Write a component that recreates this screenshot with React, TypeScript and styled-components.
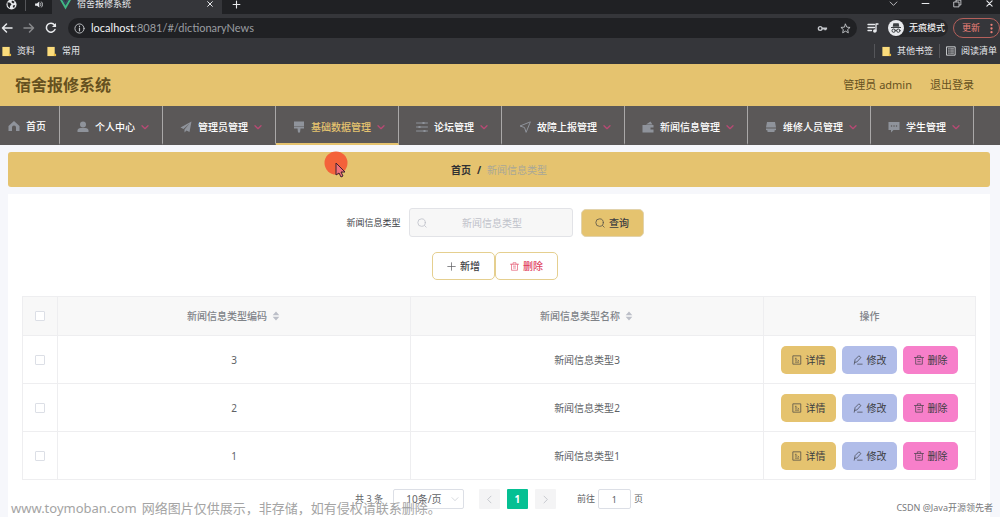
import React from "react";
import styled, { createGlobalStyle } from "styled-components";

const GlobalStyle = createGlobalStyle`
  *, *::before, *::after { box-sizing: border-box; }
  body {
    margin: 0;
    background: #f6f7fb;
    font-family: "Noto Sans", "Noto Sans CJK SC", sans-serif;
    font-size: 10px;
    line-height: 14px;
    color: #606266;
  }
  button, input, select { font: inherit; color: inherit; margin: 0; padding: 0; }
  button { border: 0; background: none; cursor: pointer; }
  a { color: inherit; text-decoration: none; }
`;

const Page = styled.div`
  position: relative;
  min-height: 100vh;
  overflow: hidden;
`;

/* ---------- icons ---------- */

const Svg = styled.svg<{ $size: number }>`
  display: block;
  flex: none;
  width: ${(p) => p.$size}px;
  height: ${(p) => p.$size}px;
  fill: none;
  stroke: currentColor;
  stroke-width: 2;
  stroke-linecap: round;
  stroke-linejoin: round;
`;

const solid = { fill: "currentColor", stroke: "none" };

const glyphs: Record<string, React.ReactNode> = {
  globe: (
    <>
      <circle cx="12" cy="12" r="11" {...solid} />
      <path d="M3 7l6 1 3 4-3 3-1 5-4-5zM13 3l6 3-3 4-4-3zM15 14l5-1-2 6-3-1z" fill="#202124" stroke="none" />
    </>
  ),
  speaker: (
    <>
      <path d="M3 9h5l6-5v16l-6-5H3z" {...solid} />
      <path d="M17 8c2 2 2 6 0 8M20 5c4 4 4 10 0 14" />
    </>
  ),
  vue: (
    <>
      <path d="M0 2h5l7 12 7-12h5L12 23z" fill="#41b883" stroke="none" />
      <path d="M5 2h4l3 5 3-5h4l-7 12z" fill="#34495e" stroke="none" />
    </>
  ),
  close: <path d="M5 5l14 14M19 5L5 19" strokeWidth="3" />,
  plusBold: <path d="M12 3v18M3 12h18" strokeWidth="3" />,
  down: <path d="M3 8l9 9 9-9" />,
  arrow: <path d="M3 8l9 9 9-9" strokeWidth="4" />,
  minimise: <path d="M3 12h18" strokeWidth="3" />,
  restore: <path d="M8 7V3h13v13h-4M3 8h13v13H3z" />,
  back: <path d="M22 12H3M11 4l-8 8 8 8" strokeWidth="3" />,
  forward: <path d="M2 12h19M13 4l8 8-8 8" strokeWidth="3" />,
  reload: (
    <>
      <path d="M20 15a9 9 0 1 1-1-9l2 2" strokeWidth="3" />
      <path d="M22 2v8h-8z" {...solid} />
    </>
  ),
  info: (
    <>
      <circle cx="12" cy="12" r="10" />
      <path d="M12 11v6M12 7v.5" strokeWidth="2.6" />
    </>
  ),
  key: (
    <>
      <circle cx="7" cy="12" r="4" strokeWidth="3" />
      <path d="M11 12h11M18 12v4" strokeWidth="4" strokeLinecap="butt" />
    </>
  ),
  star: <path d="M12 2.500l2.900 6.500 7.100.700-5.300 4.700 1.500 7L12 17.800l-6.200 3.600 1.500-7L2 9.700l7.100-.7z" />,
  playlist: (
    <>
      <path d="M2 5h13M2 11h13M2 17h7" strokeWidth="2.600" />
      <path d="M18 18V4h4" strokeWidth="2.600" />
      <circle cx="15.500" cy="18" r="3.500" {...solid} />
    </>
  ),
  incognito: (
    <>
      <circle cx="12" cy="12" r="12" fill="#e8eaed" stroke="none" />
      <path d="M8 5h8l1 5H7zM4.500 10.500h15V12h-15z" fill="#3c4043" stroke="none" />
      <g stroke="#3c4043" strokeWidth="1.500">
        <circle cx="8.500" cy="16" r="2.500" />
        <circle cx="15.500" cy="16" r="2.500" />
        <path d="M11 15.500h2" />
      </g>
    </>
  ),
  more: (
    <g {...solid}>
      <circle cx="12" cy="4" r="2.500" />
      <circle cx="12" cy="12" r="2.500" />
      <circle cx="12" cy="20" r="2.500" />
    </g>
  ),
  folder: (
    <>
      <path d="M3 2h16v20H3z" fill="#fbdc7c" stroke="none" />
      <path d="M17 17h5v5h-5z" fill="#e9b93f" stroke="none" />
    </>
  ),
  reading: <path d="M2 2h20v20H2zM6 7h2M11 7h7M6 12h2M11 12h7M6 17h2M11 17h7" />,
  home: <path d="M12 2L1 12v10h7v-7a4 4 0 0 1 8 0v7h7V12z" {...solid} />,
  user: (
    <g {...solid}>
      <circle cx="12" cy="7" r="6" />
      <path d="M1 22v-3c0-3 3-5 6-5h10c3 0 6 2 6 5v3z" />
    </g>
  ),
  promotion: <path d="M23 1L1 13l6 3L19 5 9 17v6l4-4 6 3z" {...solid} />,
  brush: <path d="M2 1h20v9H2zM2 11h20v4h-7l-1 8h-4l-1-8H2z" {...solid} />,
  sliders: (
    <>
      <path d="M1 4h22M1 12h22M1 20h22" />
      <path d="M15 2v4M7 10v4M17 18v4" strokeWidth="4" strokeLinecap="butt" />
    </>
  ),
  position: <path d="M22 2L2 10l9 3 3 9z" />,
  wallet: (
    <>
      <path d="M1 8h22v5h-6v4h6v6H1z" {...solid} />
      <path d="M8 7l9-6 4 6z" {...solid} />
    </>
  ),
  printer: (
    <>
      <path d="M4 2h16l2 11H2z" {...solid} />
      <path d="M2 15h20v3l-3 1v3H5v-3l-3-1z" {...solid} />
    </>
  ),
  chat: (
    <>
      <path d="M1 2h22v16H11l-5 5v-5H1z" {...solid} />
      <path d="M7 10h.1M12 10h.1M17 10h.1" stroke="#5b5858" strokeWidth="3" />
    </>
  ),
  search: (
    <>
      <circle cx="11" cy="11" r="9" />
      <path d="M18 18l4 4" />
    </>
  ),
  plus: <path d="M12 2v20M2 12h20" />,
  trash: <path d="M1 6h22M8 6V2h8v4M4 6v16h16V6M9 11h6M9 16h6" />,
  detail: <path d="M3 2h18v20H3zM8 8h2M8 12h3M8 17h8M14 12l2 2" />,
  edit: <path d="M4 17l1-6 9-9 5 4-9 10zM4 17l-1 5M11 22h11" />,
  left: <path d="M16 3l-9 9 9 9" />,
  right: <path d="M8 3l9 9-9 9" />,
  sort: <path d="M12 1l8 9H4zM12 23l8-9H4z" {...solid} />,
};

const Icon = ({ name, size = 12 }: { name: string; size?: number }) => (
  <Svg viewBox="0 0 24 24" $size={size} aria-hidden="true">
    {glyphs[name]}
  </Svg>
);

/* ---------- browser chrome ---------- */

const Browser = styled.div`
  background: #35363a;
  color: #e8eaed;
`;

const TabStrip = styled.div`
  display: flex;
  height: 14px;
  overflow: hidden;
  background: #202124;
`;

const PinnedTabs = styled.div`
  display: flex;
  align-items: center;
  justify-content: space-between;
  width: 52px;
  padding: 0 9px 6px 6px;
`;

const TabDivider = styled.span`
  width: 1px;
  height: 14px;
  background: #55565a;
`;

const ActiveTab = styled.div`
  display: flex;
  align-items: center;
  gap: 6px;
  width: 170px;
  padding: 0 8px 6px;
  background: #35363a;
`;

const TabTitle = styled.span`
  flex: 1;
  font-size: 9px;
  white-space: nowrap;
`;

const StripButtons = styled.div`
  display: flex;
  align-items: center;
  padding: 0 10px 6px;
`;

const WindowButtons = styled(StripButtons)`
  gap: 23px;
  margin-left: auto;
  padding: 0 6px 8px;
`;

const IconButton = styled.button<{ $dim?: boolean }>`
  display: flex;
  flex: none;
  color: ${(p) => (p.$dim ? "#88898c" : "inherit")};
`;

const Toolbar = styled.div`
  display: flex;
  align-items: center;
  height: 28px;
`;

const NavButtons = styled.div`
  display: flex;
  gap: 10px;
  width: 68px;
  padding-left: 1px;
`;

const AddressBar = styled.div`
  display: flex;
  flex: 1;
  align-items: center;
  gap: 12px;
  height: 20px;
  padding: 0 6px;
  border-radius: 10px;
  background: #202124;
  color: #c4c7cb;
`;

const Url = styled.span`
  flex: 1;
  margin-left: -6px;
  font-family: Lato, sans-serif;
  font-size: 11px;
  color: #9a9da1;
  b { font-weight: 400; color: #f1f3f4; }
`;

const ToolbarRight = styled.div`
  display: flex;
  align-items: center;
  gap: 5px;
  padding-left: 10px;
`;

const Profile = styled.div`
  display: flex;
  align-items: center;
  gap: 5px;
  height: 18px;
  margin-left: 4px;
  padding-right: 3px;
  border-radius: 9px;
  background: #27282b;
  font-size: 9px;
  color: #fff;
`;

const UpdateButton = styled.button`
  display: flex;
  align-items: center;
  gap: 6px;
  height: 20px;
  padding: 0 2px 0 8px;
  border: 1px solid #b5605b;
  border-radius: 10px;
  font-size: 9px;
  color: #ee8078;
`;

const Bookmarks = styled.div`
  display: flex;
  align-items: center;
  gap: 11px;
  height: 22px;
  padding: 0 3px 4px 1px;
  font-size: 9px;
`;

const Bookmark = styled.a`
  display: flex;
  align-items: center;
  gap: 5px;
`;

const BookmarksRight = styled.div`
  display: flex;
  align-items: center;
  gap: 6px;
  margin-left: auto;
`;

/* ---------- application header ---------- */

const Header = styled.header`
  display: flex;
  align-items: center;
  justify-content: space-between;
  height: 42px;
  padding: 0 26px 0 15px;
  background: #e5c36f;
  color: #66511f;
`;

const Title = styled.h1`
  margin: 0;
  font-size: 16px;
  line-height: 24px;
  font-weight: 700;
`;

const Account = styled.div`
  display: flex;
  gap: 18px;
  font-size: 11px;
`;

const NavBar = styled.nav`
  display: flex;
  height: 39px;
  overflow: hidden;
  background: #5b5858;
`;

const NavItem = styled.a<{ $active?: boolean; $home?: boolean }>`
  display: flex;
  flex: none;
  align-items: center;
  gap: 6px;
  padding: ${(p) => (p.$home ? "3px 13px 0 8px" : "4px 13px 0 17px")};
  border-right: 1px solid #aaa8a8;
  border-bottom: 2px solid ${(p) => (p.$active ? "#e5c36f" : "transparent")};
  font-weight: 500;
  color: ${(p) => (p.$active ? "#e5c36f" : "#fff")};
`;

const NavIcon = styled.span`
  color: #8f939b;
`;

const NavArrow = styled.span`
  color: #b74a74;
`;

/* ---------- content ---------- */

const Main = styled.main`
  display: flex;
  flex-direction: column;
  gap: 7px;
  padding: 7px 10px 0 8px;
`;

const Breadcrumb = styled.nav`
  display: flex;
  align-items: center;
  justify-content: center;
  gap: 6px;
  height: 35px;
  border-radius: 3px;
  background: #e5c36f;
  color: #a9a797;
  a, b { font-weight: 700; color: #303133; }
`;

const Panel = styled.section`
  padding: 14px 14px 8px;
  background: #fff;
`;

const SearchForm = styled.form`
  display: flex;
  align-items: center;
  justify-content: center;
  gap: 8px;
  padding-right: 8px;
`;

const FieldLabel = styled.label`
  font-size: 9px;
  color: #404247;
`;

const SearchBox = styled.div`
  display: grid;
  width: 164px;
  height: 29px;
  align-items: center;
  border: 1px solid #e2e3e7;
  border-radius: 3px;
  background: #f7f7f7;
  color: #bfc2ca;
  grid-template-columns: 22px 1fr 26px;
  padding-left: 7px;
`;

const SearchInput = styled.input`
  min-width: 0;
  border: 0;
  outline: 0;
  background: transparent;
  text-align: center;
  &::placeholder { color: #c0c2ca; opacity: 1; }
`;

const ActionButton = styled.button<{ $bg?: string; $border?: string; $fg?: string; $wide?: boolean }>`
  display: flex;
  align-items: center;
  justify-content: center;
  gap: 4px;
  width: ${(p) => (p.$wide ? 63 : 55)}px;
  height: 28px;
  border: 1px solid ${(p) => p.$border ?? "transparent"};
  border-radius: 5px;
  background: ${(p) => p.$bg ?? "#fff"};
  font-weight: ${(p) => (p.$wide ? 500 : 400)};
  color: ${(p) => p.$fg ?? "#3c3d42"};
  svg { opacity: 0.8; }
`;

const TableActions = styled.div`
  display: flex;
  justify-content: center;
  padding: 15px 8px 16px 0;
`;

const DataTable = styled.table`
  width: 100%;
  table-layout: fixed;
  border-collapse: collapse;
  text-align: center;
`;

const HeadCell = styled.th`
  height: 39px;
  padding: 0;
  border: 1px solid #eeeef0;
  background: #f8f8f8;
  font-weight: 500;
  color: #808388;
`;

const Cell = styled.td`
  height: 48px;
  padding: 0;
  border: 1px solid #eeeef0;
`;

const Sortable = styled.button`
  display: inline-flex;
  align-items: center;
  gap: 4px;
  svg { color: #bcbfc8; }
`;

const Check = styled.input`
  display: block;
  width: 10px;
  height: 10px;
  margin: 0 auto;
  appearance: none;
  border: 1px solid #dcdfe6;
  border-radius: 1px;
  background: #fff;
`;

const RowActions = styled.div`
  display: flex;
  justify-content: center;
  gap: 6px;
`;

const Pagination = styled.div`
  display: flex;
  align-items: center;
  justify-content: center;
  padding-top: 9px;
  gap: 7px;
`;

const Total = styled.span`
  font-size: 9px;
`;

const PageSize = styled.div`
  display: grid;
  width: 71px;
  height: 20px;
  margin: 0 8px 0 3px;
  padding-left: 3px;
  align-items: center;
  border: 1px solid #dcdfe6;
  border-radius: 2px;
  color: #c0c4cc;
  grid-template-columns: 1fr 12px;
`;

const SizeSelect = styled.select`
  appearance: none;
  border: 0;
  background: transparent;
  color: #606266;
  text-align: center;
  text-align-last: center;
`;

const PageButton = styled.button<{ $current?: boolean }>`
  display: flex;
  align-items: center;
  justify-content: center;
  width: 21px;
  height: 20px;
  border-radius: 1px;
  background: ${(p) => (p.$current ? "#05c093" : "#f4f4f5")};
  font-weight: 700;
  color: ${(p) => (p.$current ? "#fff" : "#b8bbc2")};
`;

const Jumper = styled.label`
  display: flex;
  align-items: center;
  gap: 3px;
  margin-left: 14px;
  font-size: 9px;
`;

const PageInput = styled.input`
  width: 33px;
  height: 20px;
  border: 1px solid #dcdfe6;
  border-radius: 2px;
  text-align: center;
`;

/* ---------- overlays ---------- */

const Pointer = styled.svg`
  position: absolute;
  top: 151px;
  left: 324px;
  width: 26px;
  height: 28px;
`;

const Watermark = styled.div`
  position: absolute;
  bottom: 0;
  left: 11px;
  display: flex;
  align-items: baseline;
  gap: 5px;
  font-size: 13px;
  line-height: 18px;
  color: #a4a4a4;
  white-space: nowrap;
`;

const Credit = styled.div`
  position: absolute;
  right: 7px;
  bottom: 2px;
  font-size: 9px;
  color: #77787b;
`;

const menu = [
  { label: "个人中心", icon: "user" },
  { label: "管理员管理", icon: "promotion" },
  { label: "基础数据管理", icon: "brush", active: true },
  { label: "论坛管理", icon: "sliders" },
  { label: "故障上报管理", icon: "position" },
  { label: "新闻信息管理", icon: "wallet" },
  { label: "维修人员管理", icon: "printer" },
  { label: "学生管理", icon: "chat" },
];

const rows = [3, 2, 1];

export default function App() {
  return (
    <Page>
      <GlobalStyle />
      <Browser>
        <TabStrip>
          <PinnedTabs>
            <Icon name="globe" size={11} />
            <TabDivider />
            <Icon name="speaker" size={9} />
          </PinnedTabs>
          <ActiveTab>
            <Icon name="vue" size={11} />
            <TabTitle>宿舍报修系统</TabTitle>
            <IconButton aria-label="关闭标签页"><Icon name="close" size={8} /></IconButton>
          </ActiveTab>
          <StripButtons>
            <IconButton aria-label="新标签页"><Icon name="plusBold" size={9} /></IconButton>
          </StripButtons>
          <WindowButtons>
            <IconButton aria-label="搜索标签页"><Icon name="down" size={9} /></IconButton>
            <IconButton aria-label="最小化"><Icon name="minimise" size={9} /></IconButton>
            <IconButton aria-label="还原"><Icon name="restore" size={9} /></IconButton>
            <IconButton aria-label="关闭"><Icon name="close" size={9} /></IconButton>
          </WindowButtons>
        </TabStrip>
        <Toolbar>
          <NavButtons>
            <IconButton aria-label="后退"><Icon name="back" /></IconButton>
            <IconButton aria-label="前进" $dim><Icon name="forward" /></IconButton>
            <IconButton aria-label="重新加载"><Icon name="reload" /></IconButton>
          </NavButtons>
          <AddressBar>
            <Icon name="info" size={11} />
            <Url><b>localhost</b>:8081/#/dictionaryNews</Url>
            <Icon name="key" size={11} />
            <Icon name="star" size={11} />
          </AddressBar>
          <ToolbarRight>
            <Icon name="playlist" size={12} />
            <Profile>
              <Icon name="incognito" size={16} />
              无痕模式
            </Profile>
            <UpdateButton>
              更新
              <Icon name="more" size={11} />
            </UpdateButton>
          </ToolbarRight>
        </Toolbar>
        <Bookmarks>
          <Bookmark href="#"><Icon name="folder" size={11} />资料</Bookmark>
          <Bookmark href="#"><Icon name="folder" size={11} />常用</Bookmark>
          <BookmarksRight>
            <TabDivider />
            <Bookmark href="#"><Icon name="folder" size={11} />其他书签</Bookmark>
            <TabDivider />
            <Bookmark href="#"><Icon name="reading" size={10} />阅读清单</Bookmark>
          </BookmarksRight>
        </Bookmarks>
      </Browser>

      <Header>
        <Title>宿舍报修系统</Title>
        <Account>
          <span>管理员 admin</span>
          <a href="#">退出登录</a>
        </Account>
      </Header>
      <NavBar>
        <NavItem href="#" $home>
          <NavIcon><Icon name="home" size={12} /></NavIcon>
          首页
        </NavItem>
        {menu.map((item) => (
          <NavItem key={item.label} href="#" $active={item.active}>
            <NavIcon><Icon name={item.icon} size={12} /></NavIcon>
            {item.label}
            <NavArrow><Icon name="arrow" size={8} /></NavArrow>
          </NavItem>
        ))}
      </NavBar>

      <Main>
        <Breadcrumb>
          <a href="#">首页</a>
          <b>/</b>
          <span>新闻信息类型</span>
        </Breadcrumb>
        <Panel>
          <SearchForm onSubmit={(e) => e.preventDefault()}>
            <FieldLabel htmlFor="type">新闻信息类型</FieldLabel>
            <SearchBox>
              <Icon name="search" size={10} />
              <SearchInput id="type" placeholder="新闻信息类型" />
            </SearchBox>
            <ActionButton $wide $bg="#e5c36f" $border="#e2d3ac">
              <Icon name="search" size={10} />
              查询
            </ActionButton>
          </SearchForm>
          <TableActions>
            <ActionButton $wide $border="#e5cf8f">
              <Icon name="plus" size={9} />
              新增
            </ActionButton>
            <ActionButton $wide $border="#e5cf8f" $fg="#e0405e">
              <Icon name="trash" size={9} />
              删除
            </ActionButton>
          </TableActions>
          <DataTable>
            <colgroup>
              <col style={{ width: 35 }} />
              <col />
              <col />
              <col style={{ width: 212 }} />
            </colgroup>
            <thead>
              <tr>
                <HeadCell><Check type="checkbox" aria-label="全选" /></HeadCell>
                <HeadCell><Sortable>新闻信息类型编码<Icon name="sort" size={10} /></Sortable></HeadCell>
                <HeadCell><Sortable>新闻信息类型名称<Icon name="sort" size={10} /></Sortable></HeadCell>
                <HeadCell>操作</HeadCell>
              </tr>
            </thead>
            <tbody>
              {rows.map((n) => (
                <tr key={n}>
                  <Cell><Check type="checkbox" aria-label={`选择 ${n}`} /></Cell>
                  <Cell>{n}</Cell>
                  <Cell>新闻信息类型{n}</Cell>
                  <Cell>
                    <RowActions>
                      <ActionButton $bg="#e5c36f"><Icon name="detail" size={10} />详情</ActionButton>
                      <ActionButton $bg="#b1bde9"><Icon name="edit" size={10} />修改</ActionButton>
                      <ActionButton $bg="#f77fca"><Icon name="trash" size={10} />删除</ActionButton>
                    </RowActions>
                  </Cell>
                </tr>
              ))}
            </tbody>
          </DataTable>
          <Pagination>
            <Total>共 3 条</Total>
            <PageSize>
              <SizeSelect aria-label="每页条数" defaultValue="10">
                <option value="10">10条/页</option>
                <option value="20">20条/页</option>
              </SizeSelect>
              <Icon name="down" size={8} />
            </PageSize>
            <PageButton aria-label="上一页"><Icon name="left" size={9} /></PageButton>
            <PageButton $current>1</PageButton>
            <PageButton aria-label="下一页"><Icon name="right" size={9} /></PageButton>
            <Jumper>
              前往
              <PageInput type="text" defaultValue="1" />
              页
            </Jumper>
          </Pagination>
        </Panel>
      </Main>

      <Pointer viewBox="0 0 26 28" aria-hidden="true">
        <circle cx="12" cy="12" r="11.500" fill="#f4623a" />
        <path d="M12 12v12l3-2 2 4 2-1-2-4h4z" fill="#f0707c" stroke="#3d2330" strokeWidth="1" />
      </Pointer>
      <Watermark>
        <span>www.toymoban.com</span>
        <span>网络图片仅供展示，非存储，如有侵权请联系删除。</span>
      </Watermark>
      <Credit>CSDN @Java开源领先者</Credit>
    </Page>
  );
}
